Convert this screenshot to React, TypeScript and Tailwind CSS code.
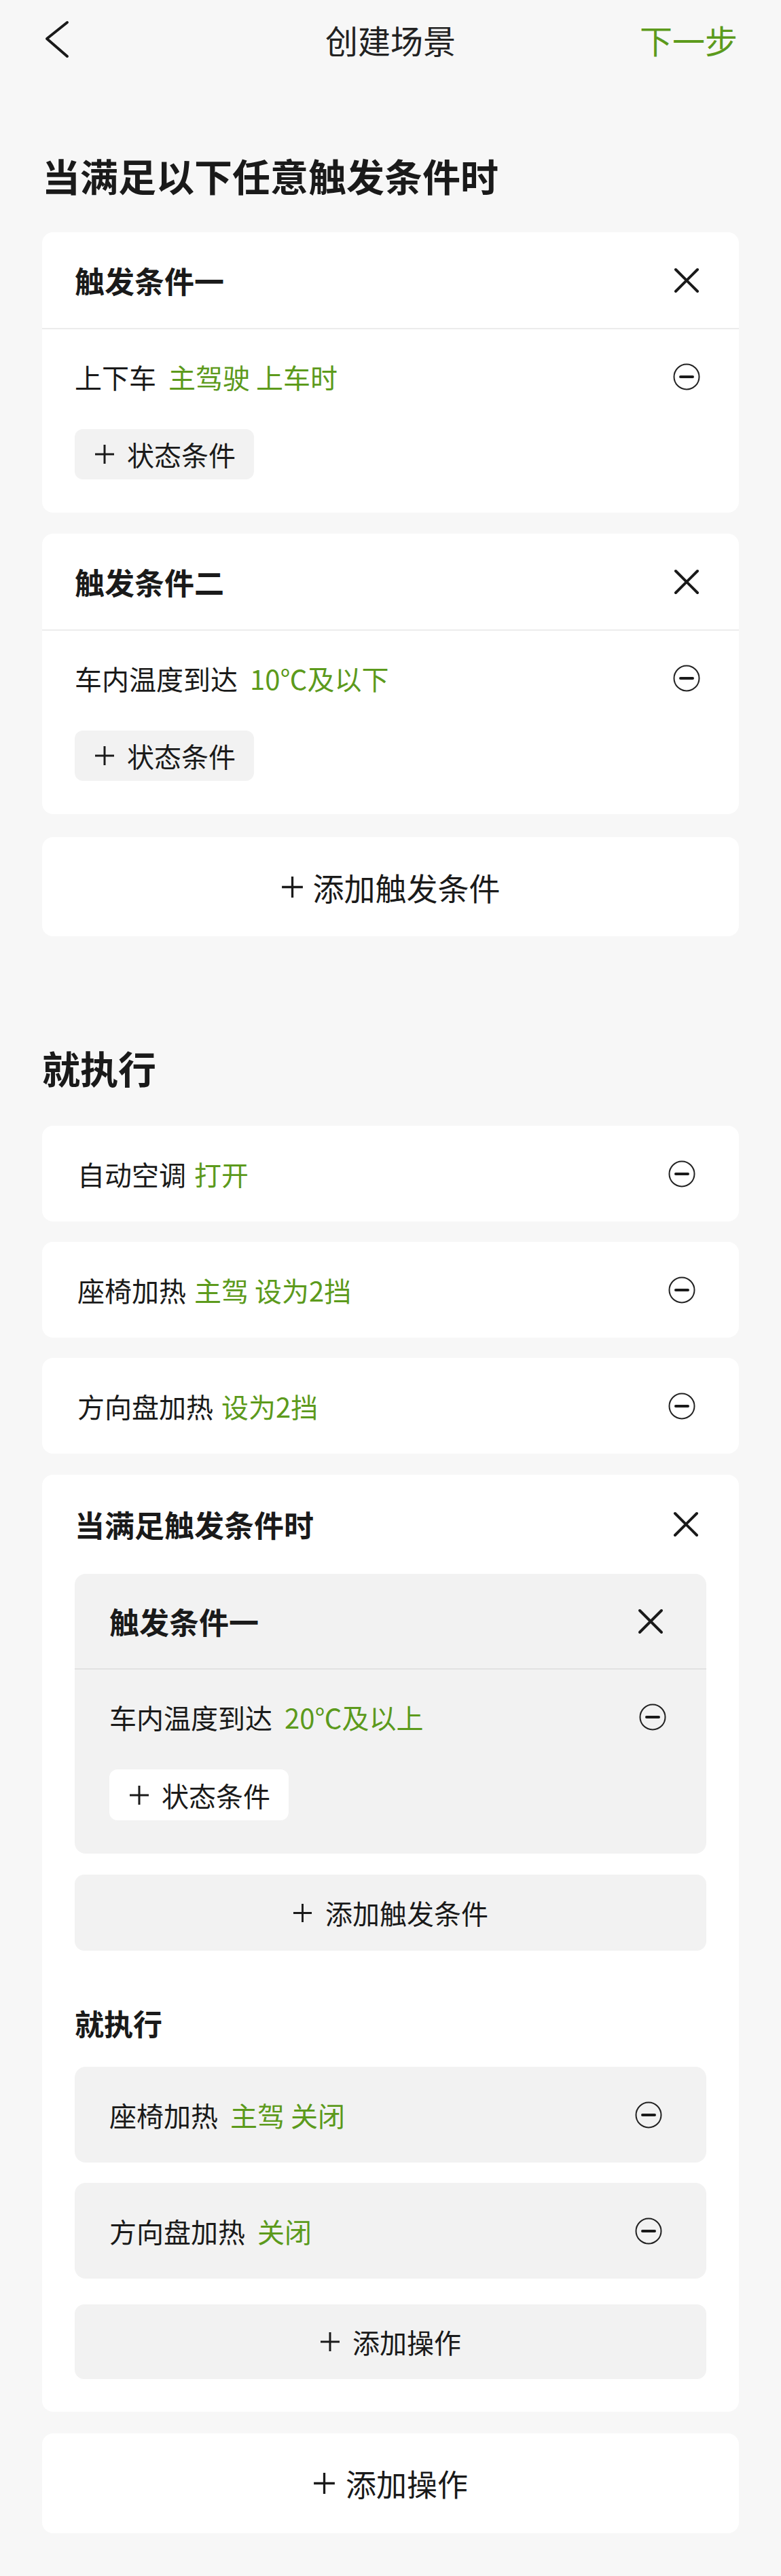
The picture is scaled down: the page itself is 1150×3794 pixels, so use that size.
import React from "react";

const GREEN = "text-[#5c9a1c]";

function Chevron() {
  return (
    <svg width="36" height="56" viewBox="0 0 36 56" fill="none">
      <polyline points="33,3 3,27 33,53" stroke="#1a1a1a" strokeWidth="4" strokeLinecap="round" strokeLinejoin="round" />
    </svg>
  );
}

function XIcon() {
  return (
    <svg width="40" height="40" viewBox="0 0 40 40" fill="none">
      <path d="M4 4 L36 36 M36 4 L4 36" stroke="#1a1a1a" strokeWidth="4" strokeLinecap="round" />
    </svg>
  );
}

function MinusCircle() {
  return (
    <svg width="40" height="40" viewBox="0 0 40 40" fill="none">
      <circle cx="20" cy="20" r="18.5" stroke="#222" strokeWidth="2" />
      <path d="M11 20 H29" stroke="#1a1a1a" strokeWidth="4" strokeLinecap="round" />
    </svg>
  );
}

function Plus({ size = 30 }: { size?: number }) {
  return (
    <svg width={size} height={size} viewBox="0 0 30 30" fill="none">
      <path d="M15 1 V29 M1 15 H29" stroke="#1a1a1a" strokeWidth="3" />
    </svg>
  );
}

interface RowProps {
  label: string;
  value: string;
}

function RowText({ label, value, tight }: RowProps & { tight?: boolean }) {
  return (
    <div className="flex items-center text-[40px] leading-none text-[#1a1a1a] whitespace-nowrap">
      <span>{label}</span>
      <span className={tight ? `ml-[12px] ${GREEN}` : `ml-[18px] ${GREEN}`}>{value}</span>
    </div>
  );
}

function TriggerCard({ title, label, value, inner }: RowProps & { title: string; inner?: boolean }) {
  return (
    <div className={inner ? "bg-[#f2f2f2] rounded-[16px]" : "bg-white rounded-[16px]"}>
      <div className={inner ? "h-[139px] flex items-center justify-between pl-[51px] pr-[62px]" : "h-[141px] flex items-center justify-between pl-[48px] pr-[57px]"}>
        <span className="text-[44px] font-bold leading-none text-[#1a1a1a]">{title}</span>
        <XIcon />
      </div>
      <div className={inner ? "h-[2px] bg-[#e2e2e2]" : "h-[2px] bg-[#ececec]"} />
      <div className={inner ? "pt-[50px] pb-[49px] pl-[51px] pr-[59px]" : "pt-[50px] pb-[49px] pl-[48px] pr-[57px]"}>
        <div className="h-[40px] flex items-center justify-between">
          <RowText label={label} value={value} />
          <MinusCircle />
        </div>
        <div
          className={
            inner
              ? "mt-[57px] h-[75px] w-[264px] rounded-[12px] bg-white flex items-center pl-[29px] gap-[18px]"
              : "mt-[57px] h-[74px] w-[264px] rounded-[12px] bg-[#f2f2f2] flex items-center pl-[29px] gap-[18px]"
          }
        >
          <Plus />
          <span className="text-[40px] leading-none text-[#1a1a1a]">状态条件</span>
        </div>
      </div>
    </div>
  );
}

function ActionCard({ label, value, inner }: RowProps & { inner?: boolean }) {
  return (
    <div
      className={
        inner
          ? "h-[141px] rounded-[16px] bg-[#f2f2f2] flex items-center justify-between pl-[51px] pr-[65px]"
          : "h-[141px] rounded-[16px] bg-white flex items-center justify-between pl-[52px] pr-[64px]"
      }
    >
      <RowText label={label} value={value} tight={!inner} />
      <MinusCircle />
    </div>
  );
}

export default function App() {
  return (
    <div className="min-h-[3794px] w-full bg-[#f7f7f7] font-['Noto_Sans_CJK_SC','Noto_Sans',sans-serif] text-[#1a1a1a]">
      {/* top bar */}
      <div className="relative h-[116px] flex items-center justify-between pl-[66px] pr-[64px]">
        <Chevron />
        <span className="absolute left-1/2 -translate-x-1/2 text-[48px] leading-none text-[#222]">创建场景</span>
        <span className={`text-[48px] leading-none ${GREEN}`}>下一步</span>
      </div>

      <div className="px-[62px] pb-[62px]">
        <h1 className="mt-[114px] h-[56px] text-[56px] leading-none font-bold">当满足以下任意触发条件时</h1>

        <div className="mt-[56px]">
          <TriggerCard title="触发条件一" label="上下车" value="主驾驶 上车时" />
        </div>
        <div className="mt-[31px]">
          <TriggerCard title="触发条件二" label="车内温度到达" value="10℃及以下" />
        </div>

        <div className="mt-[34px] h-[146px] rounded-[16px] bg-white flex items-center justify-center gap-[14px]">
          <Plus size={33} />
          <span className="text-[46px] leading-none">添加触发条件</span>
        </div>

        <h2 className="mt-[165px] h-[56px] text-[56px] leading-none font-bold">就执行</h2>

        <div className="mt-[58px] flex flex-col gap-[30px]">
          <ActionCard label="自动空调" value="打开" />
          <ActionCard label="座椅加热" value="主驾 设为2挡" />
          <ActionCard label="方向盘加热" value="设为2挡" />
        </div>

        {/* nested condition block */}
        <div className="mt-[31px] rounded-[16px] bg-white px-[48px] pb-[48px]">
          <div className="h-[146px] flex items-center justify-between pr-[10px]">
            <span className="text-[44px] font-bold leading-none">当满足触发条件时</span>
            <XIcon />
          </div>

          <TriggerCard inner title="触发条件一" label="车内温度到达" value="20℃及以上" />

          <div className="mt-[31px] h-[112px] rounded-[14px] bg-[#f2f2f2] flex items-center justify-center gap-[19px]">
            <Plus size={29} />
            <span className="text-[40px] leading-none">添加触发条件</span>
          </div>

          <h3 className="mt-[85px] h-[43px] text-[43px] leading-none font-bold">就执行</h3>

          <div className="mt-[43px] flex flex-col gap-[30px]">
            <ActionCard inner label="座椅加热" value="主驾 关闭" />
            <ActionCard inner label="方向盘加热" value="关闭" />
          </div>

          <div className="mt-[38px] h-[110px] rounded-[14px] bg-[#f2f2f2] flex items-center justify-center gap-[18px]">
            <Plus size={30} />
            <span className="text-[40px] leading-none">添加操作</span>
          </div>
        </div>

        <div className="mt-[32px] h-[147px] rounded-[16px] bg-white flex items-center justify-center gap-[15px]">
          <Plus size={33} />
          <span className="text-[45px] leading-none">添加操作</span>
        </div>
      </div>
    </div>
  );
}
